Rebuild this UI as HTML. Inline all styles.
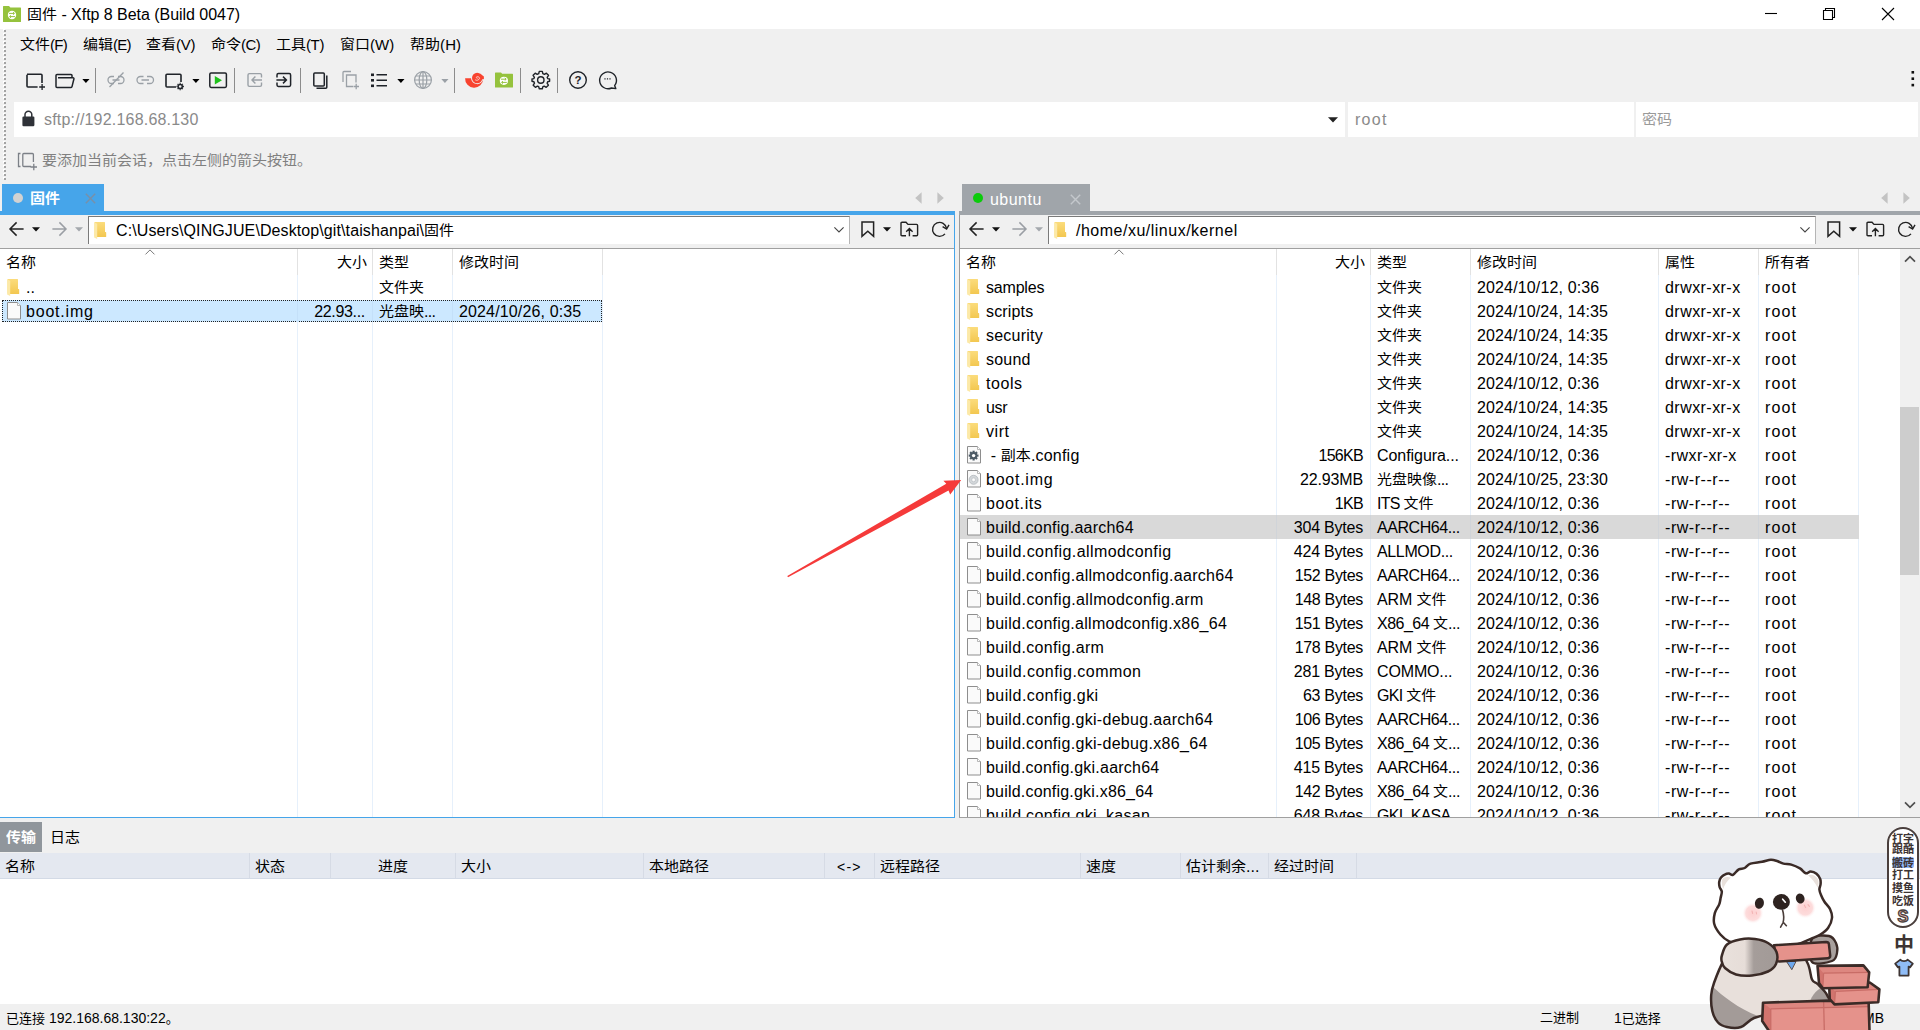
<!DOCTYPE html><html lang="zh-CN"><head><meta charset="utf-8"><title>Xftp</title><style>html,body{margin:0;padding:0}
body{width:1920px;height:1030px;overflow:hidden;background:#f0f0f0;position:relative;font-family:"Liberation Sans","Noto Sans CJK SC",sans-serif;font-size:16px;color:#000;letter-spacing:.3px}
.c{font-size:15px;letter-spacing:0;display:inline-block;transform:scaleY(.91);transform-origin:50% 32%}
.a{position:absolute}
.t{position:absolute;white-space:nowrap;line-height:24px;height:24px;margin-top:1px}
svg{position:absolute;overflow:visible}
.r{text-align:right}
.row{position:absolute;height:24px;left:0}
.sep{position:absolute;width:1px;background:#e5eefb}
</style></head><body>
<div class="a" style="left:0;top:0;width:1920px;height:29px;background:#fff"></div>
<svg style="left:3px;top:6px" width="18" height="16" viewBox="0 0 18 16">
<path d="M0 0.6 Q0 0 .6 0 H6 L7.4 1.6 H17.4 Q18 1.6 18 2.2 V15.4 Q18 16 17.4 16 H.6 Q0 16 0 15.4Z" fill="#95c23d"/>
<circle cx="9" cy="9" r="4.2" fill="#fff"/>
<path d="M6 7.4 H11.2 M10 6.2 L11.4 7.4 L10 8.6 M12 10.6 H6.8 M8 9.4 L6.6 10.6 L8 11.8" stroke="#95c23d" stroke-width="1" fill="none"/>
</svg>
<div class="t" style="left:27px;top:2px;letter-spacing:-0.04px"><span class="c">固件</span> - Xftp 8 Beta (Build 0047)</div>
<svg style="left:1760px;top:0" width="160" height="29" viewBox="0 0 160 29">
<path d="M5 13.5 H17" stroke="#000" stroke-width="1.1"/>
<path d="M63.5 10.5 H72.5 V19.5 H63.5Z M65.5 10.5 V8.5 H74.5 V17.5 H72.5" stroke="#000" stroke-width="1.1" fill="none"/>
<path d="M122 8 L134 20 M134 8 L122 20" stroke="#000" stroke-width="1.1"/>
</svg>
<div class="a" style="left:3px;top:29px;width:2px;height:150px;background:repeating-linear-gradient(to bottom,#fff 0 2px,transparent 2px 4px)"></div>
<div class="a" style="left:4px;top:30px;width:2px;height:150px;background:repeating-linear-gradient(to bottom,#a3a3a3 0 2px,transparent 2px 4px)"></div>
<div class="t" style="left:20px;top:32px;letter-spacing:-0.67px;font-size:15px"><span class="c">文件</span>(F)</div>
<div class="t" style="left:83px;top:32px;letter-spacing:-0.7px;font-size:15px"><span class="c">编辑</span>(E)</div>
<div class="t" style="left:146px;top:32px;letter-spacing:-0.21px;font-size:15px"><span class="c">查看</span>(V)</div>
<div class="t" style="left:211px;top:32px;letter-spacing:-0.54px;font-size:15px"><span class="c">命令</span>(C)</div>
<div class="t" style="left:276px;top:32px;letter-spacing:-0.39px;font-size:15px"><span class="c">工具</span>(T)</div>
<div class="t" style="left:340px;top:32px;letter-spacing:0.01px;font-size:15px"><span class="c">窗口</span>(W)</div>
<div class="t" style="left:410px;top:32px;letter-spacing:0.14px;font-size:15px"><span class="c">帮助</span>(H)</div>
<svg style="left:0;top:0" width="640" height="100" viewBox="0 0 640 100"><path d="M27 74.2 H41 Q42 74.2 42 75.2 V83 M37.6 87 H28 Q27 87 27 86 V74.7" stroke="#1f2329" stroke-width="1.6" fill="none"/><path d="M39.2 87 H45 M42.1 84 V90" stroke="#1f2329" stroke-width="1.3"/><path d="M56 86.5 V75.5 Q56 74.5 57 74.5 H71 Q72 74.5 72 75.5 V77 M58 77.8 H73 Q74.2 77.8 73.9 79 L72 86.6 Q71.7 87.6 70.7 87.6 H57 Q56 87.6 56 86.6" stroke="#1f2329" stroke-width="1.5" fill="none"/><g stroke="#9aa0a6" stroke-width="1.3" fill="none"><path d="M114 76.5 H111.5 A3.5 3.5 0 0 0 111.5 83.5 H114 M118 76.5 H120.5 A3.5 3.5 0 0 1 120.5 83.5 H118 M112.5 80 H119.5"/><path d="M109.5 87 L123.5 72.5"/></g><g stroke="#9aa0a6" stroke-width="1.3" fill="none"><path d="M143.5 76.5 H140.5 A3.5 3.5 0 0 0 140.5 83.5 H143.5 M147 76.5 H150 A3.5 3.5 0 0 1 150 83.5 H147 M141.5 80 H149"/></g><path d="M176 87 H167 Q166 87 166 86 V75.2 Q166 74.2 167 74.2 H180 Q181 74.2 181 75.2 V82" stroke="#1f2329" stroke-width="1.6" fill="none"/><circle cx="180.2" cy="86.5" r="2.1" stroke="#1f2329" stroke-width="1.5" fill="none"/><path transform="translate(-.3 -1)" d="M180.5 83.8V84.8M180.5 90.2V91.2M176.8 87.5H177.8M183.2 87.5H184.2M177.9 84.9L178.6 85.6M182.4 89.4L183.1 90.1M177.9 90.1L178.6 89.4M182.4 85.6L183.1 84.9" stroke="#1f2329" stroke-width="1.3"/><rect x="209.8" y="73" width="16.6" height="14.4" rx="1.3" stroke="#1f2329" stroke-width="1.5" fill="none"/><path d="M214.8 76 L222 80.2 L214.8 84.4Z" fill="#1fc11b"/><g stroke="#9aa0a6" stroke-width="1.4" fill="none"><path d="M261.5 77.4 V75 Q261.5 73.6 260.1 73.6 H249.4 Q248 73.6 248 75 V85 Q248 86.4 249.4 86.4 H260.1 Q261.5 86.4 261.5 85 V82.6 M252 80 H262 M255.4 76.6 L252 80 L255.4 83.4"/></g><g stroke="#1f2329" stroke-width="1.5" fill="none"><path d="M277 77.4 V75 Q277 73.6 278.4 73.6 H289.2 Q290.6 73.6 290.6 75 V85 Q290.6 86.4 289.2 86.4 H278.4 Q277 86.4 277 85 V82.6 M276.4 80 H286.4 M283 76.6 L286.4 80 L283 83.4"/></g><g stroke="#1f2329" stroke-width="1.5" fill="none"><rect x="313.8" y="73" width="10.5" height="13" rx="1"/><path d="M316.5 88.3 H325.8 Q326.8 88.3 326.8 87.3 V75.5"/></g><g stroke="#9aa0a6" stroke-width="1.3" fill="none"><path d="M343 82 V72.5 Q343 71.5 344 71.5 H351"/><path d="M353 86.5 H346.5 V75 H356 V82.5"/><path d="M353.5 86.5 H359 M356.2 83.8 V89.2"/></g><g fill="#1f2329"><rect x="371" y="73.5" width="3" height="2.6"/><rect x="371" y="79" width="3" height="2.6"/><rect x="371" y="84.5" width="3" height="2.6"/><rect x="376.5" y="74" width="10.5" height="1.5"/><rect x="376.5" y="79.5" width="10.5" height="1.5"/><rect x="376.5" y="85" width="10.5" height="1.5"/></g><g stroke="#9aa0a6" stroke-width="1.2" fill="none"><circle cx="423" cy="80" r="8.4"/><ellipse cx="423" cy="80" rx="3.8" ry="8.4"/><path d="M423 71.6 V88.4 M414.6 80 H431.4 M415.8 76 H430.2 M415.8 84 H430.2"/></g><circle cx="477.2" cy="78" r="5.2" fill="#f8432f"/><path d="M465.1 78.2 L471 78.2 A6.2 6.2 0 0 0 483.3 79 A9.1 9.1 0 0 1 465.1 78.2Z" fill="#f8432f"/><path d="M480 73.4 L483.9 76.4 L483.9 79 L481.4 79.4Z" fill="#f8432f"/><path d="M477.4 78.5 A1 1 0 0 1 476.6 76.9 A2.2 2.2 0 0 1 479.6 78.2 A2.9 2.9 0 0 1 475.2 79.8" stroke="#fcd5cf" stroke-width=".9" fill="none"/><path d="M495 73 Q495 72.4 495.6 72.4 H501 L502.2 73.8 H512.4 Q513 73.8 513 74.4 V87 Q513 87.6 512.4 87.6 H495.6 Q495 87.6 495 87Z" fill="#95c23d"/><circle cx="503.9" cy="80.8" r="4.1" fill="#fff"/><path d="M501 79.2 H506 M504.8 78 L506.2 79.2 L504.8 80.4 M506.8 82.4 H501.8 M503 81.2 L501.6 82.4 L503 83.6" stroke="#95c23d" stroke-width="1" fill="none"/><g transform="translate(540.8 80)"><path d="M-1.5 -8.6 H1.5 L2.1 -6.3 L3.6 -5.6 L5.6 -6.8 L7.7 -4.7 L6.4 -2.6 L6.9 -1.4 L8.8 -1 V1.3 L6.9 1.8 L6.3 3.2 L7.6 5.2 L5.4 7.3 L3.4 6.1 L2.1 6.7 L1.5 8.8 H-1.5 L-2.1 6.7 L-3.4 6.1 L-5.4 7.3 L-7.6 5.2 L-6.3 3.2 L-6.9 1.8 L-8.8 1.3 V-1 L-6.9 -1.4 L-6.4 -2.6 L-7.7 -4.7 L-5.6 -6.8 L-3.6 -5.6 L-2.1 -6.3Z" stroke="#1f2329" stroke-width="1.4" fill="none" stroke-linejoin="round"/><circle r="3.2" stroke="#1f2329" stroke-width="1.4" fill="none"/></g><circle cx="578" cy="80" r="8.3" stroke="#1f2329" stroke-width="1.4" fill="none"/><path d="M614.6 85.6 A8.4 8.4 0 1 0 611.5 88 L615.8 88.6 Z" stroke="#1f2329" stroke-width="1.4" fill="none" stroke-linejoin="round"/><path d="M604.4 78.8 H605.6 M606.9 78.8 H608.1 M609.4 78.8 H610.6" stroke="#1f2329" stroke-width="1.2"/><text x="578" y="84.2" text-anchor="middle" font-size="11.5" font-weight="bold" font-family="Liberation Sans,sans-serif" fill="#1f2329" letter-spacing="0">?</text></svg>
<div class="a" style="left:95px;top:68px;width:1px;height:25px;background:#8c8c8c"></div>
<div class="a" style="left:234px;top:68px;width:1px;height:25px;background:#8c8c8c"></div>
<div class="a" style="left:300px;top:68px;width:1px;height:25px;background:#8c8c8c"></div>
<div class="a" style="left:454px;top:68px;width:1px;height:25px;background:#8c8c8c"></div>
<div class="a" style="left:520px;top:68px;width:1px;height:25px;background:#8c8c8c"></div>
<div class="a" style="left:557px;top:68px;width:1px;height:25px;background:#8c8c8c"></div>
<svg style="left:82px;top:79px" width="8" height="5" viewBox="0 0 8 5"><path d="M.3 0 H7.5 L3.9 3.9Z" fill="#000"/></svg>
<svg style="left:192px;top:79px" width="8" height="5" viewBox="0 0 8 5"><path d="M.3 0 H7.5 L3.9 3.9Z" fill="#000"/></svg>
<svg style="left:397px;top:79px" width="8" height="5" viewBox="0 0 8 5"><path d="M.3 0 H7.5 L3.9 3.9Z" fill="#000"/></svg>
<svg style="left:441px;top:79px" width="8" height="5" viewBox="0 0 8 5"><path d="M.3 0 H7.5 L3.9 3.9Z" fill="#9aa0a6"/></svg>
<svg style="left:1911px;top:70px" width="4" height="18" viewBox="0 0 4 18"><rect x=".5" y="1" width="2.6" height="2.6" fill="#111"/><rect x=".5" y="7.4" width="2.6" height="2.6" fill="#111"/><rect x=".5" y="13.8" width="2.6" height="2.6" fill="#111"/></svg>
<div class="a" style="left:14px;top:102px;width:1331px;height:35px;background:#fff"></div>
<div class="a" style="left:1348px;top:102px;width:286px;height:35px;background:#fff"></div>
<div class="a" style="left:1636px;top:102px;width:282px;height:35px;background:#fff"></div>
<svg style="left:22px;top:110px" width="13" height="17" viewBox="0 0 13 17"><path d="M3 7 V4.6 A3.4 3.4 0 0 1 9.8 4.6 V7" stroke="#2f3238" stroke-width="1.5" fill="none"/><rect x=".4" y="6.6" width="12" height="9.6" rx="1.2" fill="#2f3238"/></svg>
<div class="t" style="left:44px;top:107px;color:#8a8a8a;letter-spacing:.2px">sftp://192.168.68.130</div>
<svg style="left:1328px;top:117px" width="10" height="6" viewBox="0 0 10 6"><path d="M0 .3 H10 L5 5.6Z" fill="#222"/></svg>
<div class="t" style="left:1355px;top:107px;color:#8a8a8a;letter-spacing:1.26px">root</div>
<div class="t" style="left:1642px;top:107px;color:#9a9a9a"><span class="c">密码</span></div>
<svg style="left:17px;top:151px" width="22" height="20" viewBox="0 0 22 20"><path d="M3.5 2.5 H1.5 V15.5 H3.5 M14 15.5 H6.8 Q5.8 15.5 5.8 14.5 V3.5 Q5.8 2.5 6.8 2.5 H15.4 Q16.4 2.5 16.4 3.5 V11 M13.5 16 H20 M16.8 12.8 V19.2" stroke="#7c8087" stroke-width="1.3" fill="none"/></svg>
<div class="t" style="left:42px;top:148px;color:#808080"><span class="c">要添加当前会话，点击左侧的箭头按钮。</span></div>
<svg width="0" height="0" style="left:0;top:0"><defs><linearGradient id="fg" x1="0" y1="0" x2="0" y2="1"><stop offset="0" stop-color="#fbdc7c"/><stop offset="1" stop-color="#f3c750"/></linearGradient></defs></svg>
<div class="a" style="left:0;top:249px;width:954px;height:568px;background:#fff"></div>
<div class="a" style="left:0;top:211px;width:955px;height:4px;background:#46a5ea"></div>
<div class="a" style="left:954px;top:215px;width:1px;height:603px;background:#46a5ea"></div>
<div class="a" style="left:0;top:817px;width:955px;height:1px;background:#46a5ea"></div>
<div class="a" style="left:0;top:248px;width:954px;height:1px;background:#a0a0a0"></div>
<div class="a" style="left:960px;top:249px;width:940px;height:568px;background:#fff"></div>
<div class="a" style="left:959px;top:211px;width:961px;height:4px;background:#a0a5aa"></div>
<div class="a" style="left:959px;top:215px;width:1px;height:603px;background:#9a9a9a"></div>
<div class="a" style="left:959px;top:817px;width:961px;height:1px;background:#a0a0a0"></div>
<div class="a" style="left:960px;top:248px;width:960px;height:1px;background:#a0a0a0"></div>
<div class="a" style="left:2px;top:184px;width:102px;height:27px;background:#46a5ea"></div>
<div class="a" style="left:13px;top:193px;width:10px;height:10px;border-radius:50%;background:#d2d2d2"></div>
<div class="t" style="left:30px;top:186px;color:#fff;font-weight:bold"><span class="c">固件</span></div>
<svg style="left:85px;top:193px" width="11" height="11" viewBox="0 0 11 11"><path d="M.8 .8 L10.2 10.2 M10.2 .8 L.8 10.2" stroke="#7890a8" stroke-width="1.4"/></svg>
<div class="a" style="left:962px;top:184px;width:128px;height:27px;background:#a0a5aa"></div>
<div class="a" style="left:973px;top:193px;width:10px;height:10px;border-radius:50%;background:#0bcb0b"></div>
<div class="t" style="left:990px;top:187px;color:#fff;letter-spacing:0.47px">ubuntu</div>
<svg style="left:1070px;top:194px" width="11" height="11" viewBox="0 0 11 11"><path d="M.8 .8 L10.2 10.2 M10.2 .8 L.8 10.2" stroke="#c4c8cc" stroke-width="1.4"/></svg>
<svg style="left:915px;top:192px" width="7" height="12" viewBox="0 0 7 12"><path d="M6.6 .2 V11.8 L.2 6Z" fill="#c3c3c3"/></svg>
<svg style="left:937px;top:192px" width="7" height="12" viewBox="0 0 7 12"><path d="M.4 .2 V11.8 L6.8 6Z" fill="#c3c3c3"/></svg>
<svg style="left:1881px;top:192px" width="7" height="12" viewBox="0 0 7 12"><path d="M6.6 .2 V11.8 L.2 6Z" fill="#c3c3c3"/></svg>
<svg style="left:1903px;top:192px" width="7" height="12" viewBox="0 0 7 12"><path d="M.4 .2 V11.8 L6.8 6Z" fill="#c3c3c3"/></svg>
<svg style="left:9px;top:221px" width="16" height="16" viewBox="0 0 16 16"><path d="M1.2 8 H14.6 M7.6 1.4 L1 8 L7.6 14.6" stroke="#222" stroke-width="1.5" fill="none"/></svg><svg style="left:32px;top:227px" width="8" height="5" viewBox="0 0 8 5"><path d="M0 .3 H8 L4 4.6Z" fill="#111"/></svg><svg style="left:52px;top:221px" width="16" height="16" viewBox="0 0 16 16"><path d="M.4 8 H13.8 M7.4 1.4 L14 8 L7.4 14.6" stroke="#9a9ea4" stroke-width="1.5" fill="none"/></svg><svg style="left:75px;top:227px" width="8" height="5" viewBox="0 0 8 5"><path d="M0 .3 H8 L4 4.6Z" fill="#a4a8ad"/></svg><div class="a" style="left:88px;top:216px;width:760px;height:27px;background:#fff;border:solid #7a7a7a;border-width:1px 0 0 1px;border-right:1px solid #b5b5b5"></div><svg style="left:94px;top:221.5px" width="13" height="17" viewBox="0 0 13 17"><path d="M.6 0 H10.6 Q11 0 11 .4 V10 H11.8 Q12.2 10 12.2 10.4 V14.7 Q12.2 15.1 11.8 15.1 H3 L.6 14Z" fill="url(#fg)"/><path d="M.1 .2 L3.2 1.7 V17.1 L.1 15.4Z" fill="#fce9a8"/></svg><div class="t" style="left:116px;top:218px;letter-spacing:0.1px">C:\Users\QINGJUE\Desktop\git\taishanpai\<span class="c">固件</span></div><svg style="left:834px;top:227px" width="10" height="6" viewBox="0 0 10 6"><path d="M.4 .4 L5 5 L9.6 .4" stroke="#444" stroke-width="1.1" fill="none"/></svg><svg style="left:861px;top:221px" width="14" height="17" viewBox="0 0 14 17"><path d="M1 1 H12.6 V15.4 L6.8 10.2 L1 15.4Z" stroke="#222" stroke-width="1.5" fill="none" stroke-linejoin="miter"/></svg><svg style="left:883px;top:227px" width="8" height="5" viewBox="0 0 8 5"><path d="M0 .3 H8 L4 4.6Z" fill="#111"/></svg><svg style="left:900px;top:221px" width="19" height="16" viewBox="0 0 19 16"><path d="M6 14.8 H2 Q1 14.8 1 13.8 V2.2 Q1 1.2 2 1.2 H6 L8 3.4 H16.6 Q17.6 3.4 17.6 4.4 V13.8 Q17.6 14.8 16.6 14.8 H12.6 M9.4 15.2 V8 M6.2 10.8 L9.4 7.6 L12.6 10.8" stroke="#222" stroke-width="1.4" fill="none"/></svg><svg style="left:931px;top:220px" width="19" height="18" viewBox="0 0 19 18"><path d="M13.96 13.9 A7 7 0 1 1 15.53 8.43" stroke="#222" stroke-width="1.4" fill="none"/><path d="M11.6 6.6 L15.6 9 L18 4.8" stroke="#222" stroke-width="1.4" fill="none"/></svg>
<svg style="left:969px;top:221px" width="16" height="16" viewBox="0 0 16 16"><path d="M1.2 8 H14.6 M7.6 1.4 L1 8 L7.6 14.6" stroke="#222" stroke-width="1.5" fill="none"/></svg><svg style="left:992px;top:227px" width="8" height="5" viewBox="0 0 8 5"><path d="M0 .3 H8 L4 4.6Z" fill="#111"/></svg><svg style="left:1012px;top:221px" width="16" height="16" viewBox="0 0 16 16"><path d="M.4 8 H13.8 M7.4 1.4 L14 8 L7.4 14.6" stroke="#9a9ea4" stroke-width="1.5" fill="none"/></svg><svg style="left:1035px;top:227px" width="8" height="5" viewBox="0 0 8 5"><path d="M0 .3 H8 L4 4.6Z" fill="#a4a8ad"/></svg><div class="a" style="left:1048px;top:216px;width:766px;height:27px;background:#fff;border:solid #7a7a7a;border-width:1px 0 0 1px;border-right:1px solid #b5b5b5"></div><svg style="left:1054px;top:221.5px" width="13" height="17" viewBox="0 0 13 17"><path d="M.6 0 H10.6 Q11 0 11 .4 V10 H11.8 Q12.2 10 12.2 10.4 V14.7 Q12.2 15.1 11.8 15.1 H3 L.6 14Z" fill="url(#fg)"/><path d="M.1 .2 L3.2 1.7 V17.1 L.1 15.4Z" fill="#fce9a8"/></svg><div class="t" style="left:1076px;top:218px;letter-spacing:0.5px">/home/xu/linux/kernel</div><svg style="left:1800px;top:227px" width="10" height="6" viewBox="0 0 10 6"><path d="M.4 .4 L5 5 L9.6 .4" stroke="#444" stroke-width="1.1" fill="none"/></svg><svg style="left:1827px;top:221px" width="14" height="17" viewBox="0 0 14 17"><path d="M1 1 H12.6 V15.4 L6.8 10.2 L1 15.4Z" stroke="#222" stroke-width="1.5" fill="none" stroke-linejoin="miter"/></svg><svg style="left:1849px;top:227px" width="8" height="5" viewBox="0 0 8 5"><path d="M0 .3 H8 L4 4.6Z" fill="#111"/></svg><svg style="left:1866px;top:221px" width="19" height="16" viewBox="0 0 19 16"><path d="M6 14.8 H2 Q1 14.8 1 13.8 V2.2 Q1 1.2 2 1.2 H6 L8 3.4 H16.6 Q17.6 3.4 17.6 4.4 V13.8 Q17.6 14.8 16.6 14.8 H12.6 M9.4 15.2 V8 M6.2 10.8 L9.4 7.6 L12.6 10.8" stroke="#222" stroke-width="1.4" fill="none"/></svg><svg style="left:1897px;top:220px" width="19" height="18" viewBox="0 0 19 18"><path d="M13.96 13.9 A7 7 0 1 1 15.53 8.43" stroke="#222" stroke-width="1.4" fill="none"/><path d="M11.6 6.6 L15.6 9 L18 4.8" stroke="#222" stroke-width="1.4" fill="none"/></svg>
<div class="a" style="left:297px;top:249px;width:1px;height:26px;background:#e2e2e2"></div>
<div class="a" style="left:297px;top:275px;width:1px;height:542px;background:#e6f0fb"></div>
<div class="a" style="left:372px;top:249px;width:1px;height:26px;background:#e2e2e2"></div>
<div class="a" style="left:372px;top:275px;width:1px;height:542px;background:#e6f0fb"></div>
<div class="a" style="left:452px;top:249px;width:1px;height:26px;background:#e2e2e2"></div>
<div class="a" style="left:452px;top:275px;width:1px;height:542px;background:#e6f0fb"></div>
<div class="a" style="left:602px;top:249px;width:1px;height:26px;background:#e2e2e2"></div>
<div class="a" style="left:602px;top:275px;width:1px;height:542px;background:#e6f0fb"></div>
<div class="t" style="left:6px;top:250px"><span class="c">名称</span></div>
<div class="t r" style="left:307px;width:60px;top:250px"><span class="c">大小</span></div>
<div class="t" style="left:379px;top:250px"><span class="c">类型</span></div>
<div class="t" style="left:459px;top:250px"><span class="c">修改时间</span></div>
<svg style="left:145px;top:249px" width="10" height="6" viewBox="0 0 10 6"><path d="M.5 5.4 L5 .9 L9.5 5.4" stroke="#7a7a7a" stroke-width="1" fill="none"/></svg>
<svg style="left:7px;top:279px" width="13" height="17" viewBox="0 0 13 17"><path d="M.6 0 H10.6 Q11 0 11 .4 V10 H11.8 Q12.2 10 12.2 10.4 V14.7 Q12.2 15.1 11.8 15.1 H3 L.6 14Z" fill="url(#fg)"/><path d="M.1 .2 L3.2 1.7 V17.1 L.1 15.4Z" fill="#fce9a8"/></svg>
<div class="t" style="left:26px;top:275px;letter-spacing:0">..</div>
<div class="t" style="left:379px;top:275px"><span class="c">文件夹</span></div>
<div class="a" style="left:2px;top:300px;width:600px;height:22px;background:#cce8ff;outline:1px dotted #222;outline-offset:-1px"></div>
<div class="a" style="left:297px;top:301px;width:1px;height:21px;background:#c4e0f9"></div>
<div class="a" style="left:372px;top:301px;width:1px;height:21px;background:#c4e0f9"></div>
<div class="a" style="left:452px;top:301px;width:1px;height:21px;background:#c4e0f9"></div>
<svg style="left:7px;top:301.8px" width="15" height="18" viewBox="0 0 15 18"><path d="M.5 .5 H10.5 L13.5 3.5 V17 H.5Z" fill="#fafafa" stroke="#8e8e8e" stroke-width="1"/><path d="M10.5 .5 V3.5 H13.5" fill="#fff" stroke="#a6a6a6" stroke-width=".8"/></svg>
<div class="t" style="left:26px;top:299px;letter-spacing:0.79px">boot.img</div>
<div class="t r" style="left:300px;width:65px;top:299px;letter-spacing:-0.32px">22.93...</div>
<div class="t" style="left:379px;top:299px;letter-spacing:-0.7px"><span class="c">光盘映</span>...</div>
<div class="t" style="left:459px;top:299px;letter-spacing:0.14px">2024/10/26, 0:35</div>
<div class="a" style="left:1276px;top:249px;width:1px;height:26px;background:#e2e2e2"></div>
<div class="a" style="left:1276px;top:275px;width:1px;height:542px;background:#e6f0fb"></div>
<div class="a" style="left:1370px;top:249px;width:1px;height:26px;background:#e2e2e2"></div>
<div class="a" style="left:1370px;top:275px;width:1px;height:542px;background:#e6f0fb"></div>
<div class="a" style="left:1470px;top:249px;width:1px;height:26px;background:#e2e2e2"></div>
<div class="a" style="left:1470px;top:275px;width:1px;height:542px;background:#e6f0fb"></div>
<div class="a" style="left:1658px;top:249px;width:1px;height:26px;background:#e2e2e2"></div>
<div class="a" style="left:1658px;top:275px;width:1px;height:542px;background:#e6f0fb"></div>
<div class="a" style="left:1758px;top:249px;width:1px;height:26px;background:#e2e2e2"></div>
<div class="a" style="left:1758px;top:275px;width:1px;height:542px;background:#e6f0fb"></div>
<div class="a" style="left:1858px;top:249px;width:1px;height:26px;background:#e2e2e2"></div>
<div class="a" style="left:1858px;top:275px;width:1px;height:542px;background:#e6f0fb"></div>
<div class="t" style="left:966px;top:250px"><span class="c">名称</span></div>
<div class="t r" style="left:1305px;width:60px;top:250px"><span class="c">大小</span></div>
<div class="t" style="left:1377px;top:250px"><span class="c">类型</span></div>
<div class="t" style="left:1477px;top:250px"><span class="c">修改时间</span></div>
<div class="t" style="left:1665px;top:250px"><span class="c">属性</span></div>
<div class="t" style="left:1765px;top:250px"><span class="c">所有者</span></div>
<svg style="left:1114px;top:249px" width="10" height="6" viewBox="0 0 10 6"><path d="M.5 5.4 L5 .9 L9.5 5.4" stroke="#7a7a7a" stroke-width="1" fill="none"/></svg>
<div class="a" style="left:960px;top:275px;width:940px;height:542px;overflow:hidden">
<svg style="left:7px;top:4px" width="13" height="17" viewBox="0 0 13 17"><path d="M.6 0 H10.6 Q11 0 11 .4 V10 H11.8 Q12.2 10 12.2 10.4 V14.7 Q12.2 15.1 11.8 15.1 H3 L.6 14Z" fill="url(#fg)"/><path d="M.1 .2 L3.2 1.7 V17.1 L.1 15.4Z" fill="#fce9a8"/></svg>
<div class="t" style="left:26px;top:0px;white-space:pre;letter-spacing:-0.2px;">samples</div>
<div class="t" style="left:417px;top:0px;"><span class="c">文件夹</span></div>
<div class="t" style="left:517px;top:0px;letter-spacing:0.14px;">2024/10/12, 0:36</div>
<div class="t" style="left:705px;top:0px;letter-spacing:0.45px;">drwxr-xr-x</div>
<div class="t" style="left:805px;top:0px;letter-spacing:1.09px;">root</div>
<svg style="left:7px;top:28px" width="13" height="17" viewBox="0 0 13 17"><path d="M.6 0 H10.6 Q11 0 11 .4 V10 H11.8 Q12.2 10 12.2 10.4 V14.7 Q12.2 15.1 11.8 15.1 H3 L.6 14Z" fill="url(#fg)"/><path d="M.1 .2 L3.2 1.7 V17.1 L.1 15.4Z" fill="#fce9a8"/></svg>
<div class="t" style="left:26px;top:24px;white-space:pre;letter-spacing:0.15px;">scripts</div>
<div class="t" style="left:417px;top:24px;"><span class="c">文件夹</span></div>
<div class="t" style="left:517px;top:24px;letter-spacing:0.12px;">2024/10/24, 14:35</div>
<div class="t" style="left:705px;top:24px;letter-spacing:0.45px;">drwxr-xr-x</div>
<div class="t" style="left:805px;top:24px;letter-spacing:1.09px;">root</div>
<svg style="left:7px;top:52px" width="13" height="17" viewBox="0 0 13 17"><path d="M.6 0 H10.6 Q11 0 11 .4 V10 H11.8 Q12.2 10 12.2 10.4 V14.7 Q12.2 15.1 11.8 15.1 H3 L.6 14Z" fill="url(#fg)"/><path d="M.1 .2 L3.2 1.7 V17.1 L.1 15.4Z" fill="#fce9a8"/></svg>
<div class="t" style="left:26px;top:48px;white-space:pre;letter-spacing:0.22px;">security</div>
<div class="t" style="left:417px;top:48px;"><span class="c">文件夹</span></div>
<div class="t" style="left:517px;top:48px;letter-spacing:0.12px;">2024/10/24, 14:35</div>
<div class="t" style="left:705px;top:48px;letter-spacing:0.45px;">drwxr-xr-x</div>
<div class="t" style="left:805px;top:48px;letter-spacing:1.09px;">root</div>
<svg style="left:7px;top:76px" width="13" height="17" viewBox="0 0 13 17"><path d="M.6 0 H10.6 Q11 0 11 .4 V10 H11.8 Q12.2 10 12.2 10.4 V14.7 Q12.2 15.1 11.8 15.1 H3 L.6 14Z" fill="url(#fg)"/><path d="M.1 .2 L3.2 1.7 V17.1 L.1 15.4Z" fill="#fce9a8"/></svg>
<div class="t" style="left:26px;top:72px;white-space:pre;letter-spacing:0.2px;">sound</div>
<div class="t" style="left:417px;top:72px;"><span class="c">文件夹</span></div>
<div class="t" style="left:517px;top:72px;letter-spacing:0.12px;">2024/10/24, 14:35</div>
<div class="t" style="left:705px;top:72px;letter-spacing:0.45px;">drwxr-xr-x</div>
<div class="t" style="left:805px;top:72px;letter-spacing:1.09px;">root</div>
<svg style="left:7px;top:100px" width="13" height="17" viewBox="0 0 13 17"><path d="M.6 0 H10.6 Q11 0 11 .4 V10 H11.8 Q12.2 10 12.2 10.4 V14.7 Q12.2 15.1 11.8 15.1 H3 L.6 14Z" fill="url(#fg)"/><path d="M.1 .2 L3.2 1.7 V17.1 L.1 15.4Z" fill="#fce9a8"/></svg>
<div class="t" style="left:26px;top:96px;white-space:pre;letter-spacing:0.58px;">tools</div>
<div class="t" style="left:417px;top:96px;"><span class="c">文件夹</span></div>
<div class="t" style="left:517px;top:96px;letter-spacing:0.14px;">2024/10/12, 0:36</div>
<div class="t" style="left:705px;top:96px;letter-spacing:0.45px;">drwxr-xr-x</div>
<div class="t" style="left:805px;top:96px;letter-spacing:1.09px;">root</div>
<svg style="left:7px;top:124px" width="13" height="17" viewBox="0 0 13 17"><path d="M.6 0 H10.6 Q11 0 11 .4 V10 H11.8 Q12.2 10 12.2 10.4 V14.7 Q12.2 15.1 11.8 15.1 H3 L.6 14Z" fill="url(#fg)"/><path d="M.1 .2 L3.2 1.7 V17.1 L.1 15.4Z" fill="#fce9a8"/></svg>
<div class="t" style="left:26px;top:120px;white-space:pre;letter-spacing:-0.29px;">usr</div>
<div class="t" style="left:417px;top:120px;"><span class="c">文件夹</span></div>
<div class="t" style="left:517px;top:120px;letter-spacing:0.12px;">2024/10/24, 14:35</div>
<div class="t" style="left:705px;top:120px;letter-spacing:0.45px;">drwxr-xr-x</div>
<div class="t" style="left:805px;top:120px;letter-spacing:1.09px;">root</div>
<svg style="left:7px;top:148px" width="13" height="17" viewBox="0 0 13 17"><path d="M.6 0 H10.6 Q11 0 11 .4 V10 H11.8 Q12.2 10 12.2 10.4 V14.7 Q12.2 15.1 11.8 15.1 H3 L.6 14Z" fill="url(#fg)"/><path d="M.1 .2 L3.2 1.7 V17.1 L.1 15.4Z" fill="#fce9a8"/></svg>
<div class="t" style="left:26px;top:144px;white-space:pre;letter-spacing:0.56px;">virt</div>
<div class="t" style="left:417px;top:144px;"><span class="c">文件夹</span></div>
<div class="t" style="left:517px;top:144px;letter-spacing:0.12px;">2024/10/24, 14:35</div>
<div class="t" style="left:705px;top:144px;letter-spacing:0.45px;">drwxr-xr-x</div>
<div class="t" style="left:805px;top:144px;letter-spacing:1.09px;">root</div>
<svg style="left:7px;top:170.8px" width="15" height="18" viewBox="0 0 15 18"><path d="M.5 .5 H10.5 L13.5 3.5 V17 H.5Z" fill="#fafafa" stroke="#8e8e8e" stroke-width="1"/><path d="M10.5 .5 V3.5 H13.5" fill="#fff" stroke="#a6a6a6" stroke-width=".8"/><g transform="translate(6.6 9.6)" fill="#4d5b66"><circle r="3.6"/><rect x="-1.1" y="-4.9" width="2.2" height="2.2" transform="rotate(0)"/><rect x="-1.1" y="-4.9" width="2.2" height="2.2" transform="rotate(45)"/><rect x="-1.1" y="-4.9" width="2.2" height="2.2" transform="rotate(90)"/><rect x="-1.1" y="-4.9" width="2.2" height="2.2" transform="rotate(135)"/><rect x="-1.1" y="-4.9" width="2.2" height="2.2" transform="rotate(180)"/><rect x="-1.1" y="-4.9" width="2.2" height="2.2" transform="rotate(225)"/><rect x="-1.1" y="-4.9" width="2.2" height="2.2" transform="rotate(270)"/><rect x="-1.1" y="-4.9" width="2.2" height="2.2" transform="rotate(315)"/><circle r="1.7" fill="#fff"/></g></svg>
<div class="t" style="left:26px;top:168px;white-space:pre;letter-spacing:0.21px;"> - <span class="c">副本</span>.config</div>
<div class="t r" style="left:318px;width:85px;top:168px;letter-spacing:-0.7px;">156KB</div>
<div class="t" style="left:417px;top:168px;letter-spacing:-0.06px;">Configura...</div>
<div class="t" style="left:517px;top:168px;letter-spacing:0.14px;">2024/10/12, 0:36</div>
<div class="t" style="left:705px;top:168px;letter-spacing:0.42px;">-rwxr-xr-x</div>
<div class="t" style="left:805px;top:168px;letter-spacing:1.09px;">root</div>
<svg style="left:7px;top:194.8px" width="15" height="18" viewBox="0 0 15 18"><path d="M.5 .5 H10.5 L13.5 3.5 V17 H.5Z" fill="#fafafa" stroke="#8e8e8e" stroke-width="1"/><path d="M10.5 .5 V3.5 H13.5" fill="#fff" stroke="#a6a6a6" stroke-width=".8"/><circle cx="6.6" cy="9.8" r="4.5" fill="#d3d7da" stroke="#aeb3b8" stroke-width=".7"/><circle cx="6.6" cy="9.8" r="2" fill="#f4f4f4" stroke="#b3b8bd" stroke-width=".6"/><circle cx="6.6" cy="9.8" r=".8" fill="#fff"/></svg>
<div class="t" style="left:26px;top:192px;white-space:pre;letter-spacing:0.75px;">boot.img</div>
<div class="t r" style="left:318px;width:85px;top:192px;letter-spacing:-0.15px;">22.93MB</div>
<div class="t" style="left:417px;top:192px;letter-spacing:-0.7px;"><span class="c">光盘映像</span>...</div>
<div class="t" style="left:517px;top:192px;letter-spacing:0.12px;">2024/10/25, 23:30</div>
<div class="t" style="left:705px;top:192px;letter-spacing:0.55px;">-rw-r--r--</div>
<div class="t" style="left:805px;top:192px;letter-spacing:1.09px;">root</div>
<svg style="left:7px;top:218.8px" width="15" height="18" viewBox="0 0 15 18"><path d="M.5 .5 H10.5 L13.5 3.5 V17 H.5Z" fill="#fafafa" stroke="#8e8e8e" stroke-width="1"/><path d="M10.5 .5 V3.5 H13.5" fill="#fff" stroke="#a6a6a6" stroke-width=".8"/></svg>
<div class="t" style="left:26px;top:216px;white-space:pre;letter-spacing:0.61px;">boot.its</div>
<div class="t r" style="left:318px;width:85px;top:216px;letter-spacing:-0.7px;">1KB</div>
<div class="t" style="left:417px;top:216px;letter-spacing:-0.7px;">ITS <span class="c">文件</span></div>
<div class="t" style="left:517px;top:216px;letter-spacing:0.14px;">2024/10/12, 0:36</div>
<div class="t" style="left:705px;top:216px;letter-spacing:0.55px;">-rw-r--r--</div>
<div class="t" style="left:805px;top:216px;letter-spacing:1.09px;">root</div>
<div class="a" style="left:0;top:240px;width:899px;height:24px;background:#d9d9d9"></div>
<div class="a" style="left:316px;top:240px;width:1px;height:24px;background:#d0d4d9"></div>
<div class="a" style="left:410px;top:240px;width:1px;height:24px;background:#d0d4d9"></div>
<div class="a" style="left:510px;top:240px;width:1px;height:24px;background:#d0d4d9"></div>
<div class="a" style="left:698px;top:240px;width:1px;height:24px;background:#d0d4d9"></div>
<div class="a" style="left:798px;top:240px;width:1px;height:24px;background:#d0d4d9"></div>
<svg style="left:7px;top:242.8px" width="15" height="18" viewBox="0 0 15 18"><path d="M.5 .5 H10.5 L13.5 3.5 V17 H.5Z" fill="#fafafa" stroke="#8e8e8e" stroke-width="1"/><path d="M10.5 .5 V3.5 H13.5" fill="#fff" stroke="#a6a6a6" stroke-width=".8"/></svg>
<div class="t" style="left:26px;top:240px;white-space:pre;letter-spacing:0.23px;">build.config.aarch64</div>
<div class="t r" style="left:318px;width:85px;top:240px;letter-spacing:-0.22px;">304 Bytes</div>
<div class="t" style="left:417px;top:240px;letter-spacing:-0.43px;">AARCH64...</div>
<div class="t" style="left:517px;top:240px;letter-spacing:0.14px;">2024/10/12, 0:36</div>
<div class="t" style="left:705px;top:240px;letter-spacing:0.55px;">-rw-r--r--</div>
<div class="t" style="left:805px;top:240px;letter-spacing:1.09px;">root</div>
<svg style="left:7px;top:266.8px" width="15" height="18" viewBox="0 0 15 18"><path d="M.5 .5 H10.5 L13.5 3.5 V17 H.5Z" fill="#fafafa" stroke="#8e8e8e" stroke-width="1"/><path d="M10.5 .5 V3.5 H13.5" fill="#fff" stroke="#a6a6a6" stroke-width=".8"/></svg>
<div class="t" style="left:26px;top:264px;white-space:pre;letter-spacing:0.41px;">build.config.allmodconfig</div>
<div class="t r" style="left:318px;width:85px;top:264px;letter-spacing:-0.22px;">424 Bytes</div>
<div class="t" style="left:417px;top:264px;letter-spacing:-0.36px;">ALLMOD...</div>
<div class="t" style="left:517px;top:264px;letter-spacing:0.14px;">2024/10/12, 0:36</div>
<div class="t" style="left:705px;top:264px;letter-spacing:0.55px;">-rw-r--r--</div>
<div class="t" style="left:805px;top:264px;letter-spacing:1.09px;">root</div>
<svg style="left:7px;top:290.8px" width="15" height="18" viewBox="0 0 15 18"><path d="M.5 .5 H10.5 L13.5 3.5 V17 H.5Z" fill="#fafafa" stroke="#8e8e8e" stroke-width="1"/><path d="M10.5 .5 V3.5 H13.5" fill="#fff" stroke="#a6a6a6" stroke-width=".8"/></svg>
<div class="t" style="left:26px;top:288px;white-space:pre;letter-spacing:0.31px;">build.config.allmodconfig.aarch64</div>
<div class="t r" style="left:318px;width:85px;top:288px;letter-spacing:-0.31px;">152 Bytes</div>
<div class="t" style="left:417px;top:288px;letter-spacing:-0.43px;">AARCH64...</div>
<div class="t" style="left:517px;top:288px;letter-spacing:0.14px;">2024/10/12, 0:36</div>
<div class="t" style="left:705px;top:288px;letter-spacing:0.55px;">-rw-r--r--</div>
<div class="t" style="left:805px;top:288px;letter-spacing:1.09px;">root</div>
<svg style="left:7px;top:314.8px" width="15" height="18" viewBox="0 0 15 18"><path d="M.5 .5 H10.5 L13.5 3.5 V17 H.5Z" fill="#fafafa" stroke="#8e8e8e" stroke-width="1"/><path d="M10.5 .5 V3.5 H13.5" fill="#fff" stroke="#a6a6a6" stroke-width=".8"/></svg>
<div class="t" style="left:26px;top:312px;white-space:pre;letter-spacing:0.36px;">build.config.allmodconfig.arm</div>
<div class="t r" style="left:318px;width:85px;top:312px;letter-spacing:-0.31px;">148 Bytes</div>
<div class="t" style="left:417px;top:312px;letter-spacing:-0.15px;">ARM <span class="c">文件</span></div>
<div class="t" style="left:517px;top:312px;letter-spacing:0.14px;">2024/10/12, 0:36</div>
<div class="t" style="left:705px;top:312px;letter-spacing:0.55px;">-rw-r--r--</div>
<div class="t" style="left:805px;top:312px;letter-spacing:1.09px;">root</div>
<svg style="left:7px;top:338.8px" width="15" height="18" viewBox="0 0 15 18"><path d="M.5 .5 H10.5 L13.5 3.5 V17 H.5Z" fill="#fafafa" stroke="#8e8e8e" stroke-width="1"/><path d="M10.5 .5 V3.5 H13.5" fill="#fff" stroke="#a6a6a6" stroke-width=".8"/></svg>
<div class="t" style="left:26px;top:336px;white-space:pre;letter-spacing:0.28px;">build.config.allmodconfig.x86_64</div>
<div class="t r" style="left:318px;width:85px;top:336px;letter-spacing:-0.31px;">151 Bytes</div>
<div class="t" style="left:417px;top:336px;letter-spacing:-0.51px;">X86_64 <span class="c">文</span>...</div>
<div class="t" style="left:517px;top:336px;letter-spacing:0.14px;">2024/10/12, 0:36</div>
<div class="t" style="left:705px;top:336px;letter-spacing:0.55px;">-rw-r--r--</div>
<div class="t" style="left:805px;top:336px;letter-spacing:1.09px;">root</div>
<svg style="left:7px;top:362.8px" width="15" height="18" viewBox="0 0 15 18"><path d="M.5 .5 H10.5 L13.5 3.5 V17 H.5Z" fill="#fafafa" stroke="#8e8e8e" stroke-width="1"/><path d="M10.5 .5 V3.5 H13.5" fill="#fff" stroke="#a6a6a6" stroke-width=".8"/></svg>
<div class="t" style="left:26px;top:360px;white-space:pre;letter-spacing:0.33px;">build.config.arm</div>
<div class="t r" style="left:318px;width:85px;top:360px;letter-spacing:-0.31px;">178 Bytes</div>
<div class="t" style="left:417px;top:360px;letter-spacing:-0.15px;">ARM <span class="c">文件</span></div>
<div class="t" style="left:517px;top:360px;letter-spacing:0.14px;">2024/10/12, 0:36</div>
<div class="t" style="left:705px;top:360px;letter-spacing:0.55px;">-rw-r--r--</div>
<div class="t" style="left:805px;top:360px;letter-spacing:1.09px;">root</div>
<svg style="left:7px;top:386.8px" width="15" height="18" viewBox="0 0 15 18"><path d="M.5 .5 H10.5 L13.5 3.5 V17 H.5Z" fill="#fafafa" stroke="#8e8e8e" stroke-width="1"/><path d="M10.5 .5 V3.5 H13.5" fill="#fff" stroke="#a6a6a6" stroke-width=".8"/></svg>
<div class="t" style="left:26px;top:384px;white-space:pre;letter-spacing:0.46px;">build.config.common</div>
<div class="t r" style="left:318px;width:85px;top:384px;letter-spacing:-0.22px;">281 Bytes</div>
<div class="t" style="left:417px;top:384px;letter-spacing:-0.15px;">COMMO...</div>
<div class="t" style="left:517px;top:384px;letter-spacing:0.14px;">2024/10/12, 0:36</div>
<div class="t" style="left:705px;top:384px;letter-spacing:0.55px;">-rw-r--r--</div>
<div class="t" style="left:805px;top:384px;letter-spacing:1.09px;">root</div>
<svg style="left:7px;top:410.8px" width="15" height="18" viewBox="0 0 15 18"><path d="M.5 .5 H10.5 L13.5 3.5 V17 H.5Z" fill="#fafafa" stroke="#8e8e8e" stroke-width="1"/><path d="M10.5 .5 V3.5 H13.5" fill="#fff" stroke="#a6a6a6" stroke-width=".8"/></svg>
<div class="t" style="left:26px;top:408px;white-space:pre;letter-spacing:0.42px;">build.config.gki</div>
<div class="t r" style="left:318px;width:85px;top:408px;letter-spacing:-0.28px;">63 Bytes</div>
<div class="t" style="left:417px;top:408px;letter-spacing:-0.7px;">GKI <span class="c">文件</span></div>
<div class="t" style="left:517px;top:408px;letter-spacing:0.14px;">2024/10/12, 0:36</div>
<div class="t" style="left:705px;top:408px;letter-spacing:0.55px;">-rw-r--r--</div>
<div class="t" style="left:805px;top:408px;letter-spacing:1.09px;">root</div>
<svg style="left:7px;top:434.8px" width="15" height="18" viewBox="0 0 15 18"><path d="M.5 .5 H10.5 L13.5 3.5 V17 H.5Z" fill="#fafafa" stroke="#8e8e8e" stroke-width="1"/><path d="M10.5 .5 V3.5 H13.5" fill="#fff" stroke="#a6a6a6" stroke-width=".8"/></svg>
<div class="t" style="left:26px;top:432px;white-space:pre;letter-spacing:0.31px;">build.config.gki-debug.aarch64</div>
<div class="t r" style="left:318px;width:85px;top:432px;letter-spacing:-0.31px;">106 Bytes</div>
<div class="t" style="left:417px;top:432px;letter-spacing:-0.43px;">AARCH64...</div>
<div class="t" style="left:517px;top:432px;letter-spacing:0.14px;">2024/10/12, 0:36</div>
<div class="t" style="left:705px;top:432px;letter-spacing:0.55px;">-rw-r--r--</div>
<div class="t" style="left:805px;top:432px;letter-spacing:1.09px;">root</div>
<svg style="left:7px;top:458.8px" width="15" height="18" viewBox="0 0 15 18"><path d="M.5 .5 H10.5 L13.5 3.5 V17 H.5Z" fill="#fafafa" stroke="#8e8e8e" stroke-width="1"/><path d="M10.5 .5 V3.5 H13.5" fill="#fff" stroke="#a6a6a6" stroke-width=".8"/></svg>
<div class="t" style="left:26px;top:456px;white-space:pre;letter-spacing:0.31px;">build.config.gki-debug.x86_64</div>
<div class="t r" style="left:318px;width:85px;top:456px;letter-spacing:-0.31px;">105 Bytes</div>
<div class="t" style="left:417px;top:456px;letter-spacing:-0.51px;">X86_64 <span class="c">文</span>...</div>
<div class="t" style="left:517px;top:456px;letter-spacing:0.14px;">2024/10/12, 0:36</div>
<div class="t" style="left:705px;top:456px;letter-spacing:0.55px;">-rw-r--r--</div>
<div class="t" style="left:805px;top:456px;letter-spacing:1.09px;">root</div>
<svg style="left:7px;top:482.8px" width="15" height="18" viewBox="0 0 15 18"><path d="M.5 .5 H10.5 L13.5 3.5 V17 H.5Z" fill="#fafafa" stroke="#8e8e8e" stroke-width="1"/><path d="M10.5 .5 V3.5 H13.5" fill="#fff" stroke="#a6a6a6" stroke-width=".8"/></svg>
<div class="t" style="left:26px;top:480px;white-space:pre;letter-spacing:0.22px;">build.config.gki.aarch64</div>
<div class="t r" style="left:318px;width:85px;top:480px;letter-spacing:-0.22px;">415 Bytes</div>
<div class="t" style="left:417px;top:480px;letter-spacing:-0.43px;">AARCH64...</div>
<div class="t" style="left:517px;top:480px;letter-spacing:0.14px;">2024/10/12, 0:36</div>
<div class="t" style="left:705px;top:480px;letter-spacing:0.55px;">-rw-r--r--</div>
<div class="t" style="left:805px;top:480px;letter-spacing:1.09px;">root</div>
<svg style="left:7px;top:506.8px" width="15" height="18" viewBox="0 0 15 18"><path d="M.5 .5 H10.5 L13.5 3.5 V17 H.5Z" fill="#fafafa" stroke="#8e8e8e" stroke-width="1"/><path d="M10.5 .5 V3.5 H13.5" fill="#fff" stroke="#a6a6a6" stroke-width=".8"/></svg>
<div class="t" style="left:26px;top:504px;white-space:pre;letter-spacing:0.2px;">build.config.gki.x86_64</div>
<div class="t r" style="left:318px;width:85px;top:504px;letter-spacing:-0.31px;">142 Bytes</div>
<div class="t" style="left:417px;top:504px;letter-spacing:-0.51px;">X86_64 <span class="c">文</span>...</div>
<div class="t" style="left:517px;top:504px;letter-spacing:0.14px;">2024/10/12, 0:36</div>
<div class="t" style="left:705px;top:504px;letter-spacing:0.55px;">-rw-r--r--</div>
<div class="t" style="left:805px;top:504px;letter-spacing:1.09px;">root</div>
<svg style="left:7px;top:530.8px" width="15" height="18" viewBox="0 0 15 18"><path d="M.5 .5 H10.5 L13.5 3.5 V17 H.5Z" fill="#fafafa" stroke="#8e8e8e" stroke-width="1"/><path d="M10.5 .5 V3.5 H13.5" fill="#fff" stroke="#a6a6a6" stroke-width=".8"/></svg>
<div class="t" style="left:26px;top:528px;white-space:pre;letter-spacing:0.31px;">build.config.gki_kasan</div>
<div class="t r" style="left:318px;width:85px;top:528px;letter-spacing:-0.22px;">648 Bytes</div>
<div class="t" style="left:417px;top:528px;letter-spacing:-0.7px;">GKI_KASA...</div>
<div class="t" style="left:517px;top:528px;letter-spacing:0.14px;">2024/10/12, 0:36</div>
<div class="t" style="left:705px;top:528px;letter-spacing:0.55px;">-rw-r--r--</div>
<div class="t" style="left:805px;top:528px;letter-spacing:1.09px;">root</div>
</div>
<div class="a" style="left:1900px;top:249px;width:20px;height:568px;background:#f0f0f0"></div>
<div class="a" style="left:1900px;top:407px;width:19px;height:168px;background:#cdcdcd"></div>
<svg style="left:1904px;top:255px" width="12" height="8" viewBox="0 0 12 8"><path d="M1 6.6 L6 1.6 L11 6.6" stroke="#505050" stroke-width="1.7" fill="none"/></svg>
<svg style="left:1904px;top:801px" width="12" height="8" viewBox="0 0 12 8"><path d="M1 1.4 L6 6.4 L11 1.4" stroke="#505050" stroke-width="1.7" fill="none"/></svg>
<div class="a" style="left:0;top:822px;width:42px;height:30px;background:#90969c"></div>
<div class="t" style="left:6px;top:825px;color:#fff;font-weight:bold"><span class="c">传输</span></div>
<div class="t" style="left:50px;top:825px"><span class="c">日志</span></div>
<div class="a" style="left:0;top:853px;width:1920px;height:25px;background:#e4e8f0;border-bottom:1px solid #d3dae6"></div>
<div class="a" style="left:249px;top:853px;width:1px;height:25px;background:#d6dbe5"></div>
<div class="a" style="left:330px;top:853px;width:1px;height:25px;background:#d6dbe5"></div>
<div class="a" style="left:455px;top:853px;width:1px;height:25px;background:#d6dbe5"></div>
<div class="a" style="left:643px;top:853px;width:1px;height:25px;background:#d6dbe5"></div>
<div class="a" style="left:824px;top:853px;width:1px;height:25px;background:#d6dbe5"></div>
<div class="a" style="left:874px;top:853px;width:1px;height:25px;background:#d6dbe5"></div>
<div class="a" style="left:1080px;top:853px;width:1px;height:25px;background:#d6dbe5"></div>
<div class="a" style="left:1180px;top:853px;width:1px;height:25px;background:#d6dbe5"></div>
<div class="a" style="left:1268px;top:853px;width:1px;height:25px;background:#d6dbe5"></div>
<div class="a" style="left:1356px;top:853px;width:1px;height:25px;background:#d6dbe5"></div>
<div class="t" style="left:5px;top:854px;letter-spacing:0"><span class="c">名称</span></div>
<div class="t" style="left:255px;top:854px;letter-spacing:0"><span class="c">状态</span></div>
<div class="t" style="left:378px;top:854px;letter-spacing:0"><span class="c">进度</span></div>
<div class="t" style="left:461px;top:854px;letter-spacing:0"><span class="c">大小</span></div>
<div class="t" style="left:649px;top:854px;letter-spacing:0"><span class="c">本地路径</span></div>
<div class="t" style="left:880px;top:854px;letter-spacing:0"><span class="c">远程路径</span></div>
<div class="t" style="left:1086px;top:854px;letter-spacing:0"><span class="c">速度</span></div>
<div class="t" style="left:1186px;top:854px;letter-spacing:0"><span class="c">估计剩余</span>...</div>
<div class="t" style="left:1274px;top:854px;letter-spacing:0"><span class="c">经过时间</span></div>
<div class="t" style="left:837px;top:854px;font-size:14px;letter-spacing:1.2px">&lt;-&gt;</div>
<div class="a" style="left:0;top:879px;width:1920px;height:125px;background:#fff"></div>
<div class="t" style="left:6px;top:1005px;font-size:14px;letter-spacing:0"><span style="font-size:13px">已连接</span> 192.168.68.130:22<span style="font-size:13px">。</span></div>
<div class="t" style="left:1540px;top:1005px;font-size:13px;letter-spacing:0">二进制</div>
<div class="t" style="left:1614px;top:1005px;font-size:14px;letter-spacing:0">1<span style="font-size:13px">已选择</span></div>
<div class="t r" style="left:1784px;width:100px;top:1005px;font-size:14px;letter-spacing:0">22.93MB</div>
<svg style="left:0;top:0" width="1920" height="1030" viewBox="0 0 1920 1030"><path d="M787.3 576 L946.3 483.8 L943.4 480.8 L961.2 480 L950.2 494.6 L948.5 490.6 L788 577.3Z" fill="#f53a3a"/></svg>
<svg style="left:0;top:0" width="1920" height="1030" viewBox="0 0 1920 1030"><defs><linearGradient id="bg1" x1="0" y1="0" x2="1" y2="0"><stop offset="0" stop-color="#e9e1dc"/><stop offset=".42" stop-color="#e6ddd8"/><stop offset=".58" stop-color="#a59d9a"/><stop offset="1" stop-color="#a29a97"/></linearGradient><radialGradient id="ck"><stop offset="0" stop-color="#fdd0d0"/><stop offset=".65" stop-color="#fddcdc"/><stop offset="1" stop-color="#fff" stop-opacity="0"/></radialGradient><clipPath id="bodyclip"><path d="M1724.0 960.0 C1719.7 967.2 1716.1 977.2 1714.0 983.0 C1711.9 988.8 1711.5 990.3 1711.2 995.0 C1710.9 999.7 1711.2 1006.4 1712.3 1011.0 C1713.4 1015.6 1715.5 1019.8 1718.0 1022.5 C1720.5 1025.2 1723.2 1026.2 1727.0 1027.0 C1730.8 1027.8 1736.5 1028.5 1741.0 1027.0 C1745.5 1025.5 1748.3 1020.2 1754.0 1018.0 C1759.7 1015.8 1762.3 1015.0 1775.0 1014.0 C1787.7 1013.0 1821.3 1015.2 1830.0 1012.0 C1838.7 1008.8 1829.1 999.7 1827.0 995.0 C1824.9 990.3 1820.0 986.6 1817.5 984.0 C1815.0 981.4 1813.8 983.2 1812.0 979.5 C1810.2 975.8 1810.7 968.6 1807.0 962.0 C1803.3 955.4 1801.2 943.7 1790.0 940.0 C1778.8 936.3 1751.0 936.7 1740.0 940.0 C1729.0 943.3 1728.3 952.8 1724.0 960.0Z"/></clipPath></defs><path d="M1724.0 960.0 C1719.7 967.2 1716.1 977.2 1714.0 983.0 C1711.9 988.8 1711.5 990.3 1711.2 995.0 C1710.9 999.7 1711.2 1006.4 1712.3 1011.0 C1713.4 1015.6 1715.5 1019.8 1718.0 1022.5 C1720.5 1025.2 1723.2 1026.2 1727.0 1027.0 C1730.8 1027.8 1736.5 1028.5 1741.0 1027.0 C1745.5 1025.5 1748.3 1020.2 1754.0 1018.0 C1759.7 1015.8 1762.3 1015.0 1775.0 1014.0 C1787.7 1013.0 1821.3 1015.2 1830.0 1012.0 C1838.7 1008.8 1829.1 999.7 1827.0 995.0 C1824.9 990.3 1820.0 986.6 1817.5 984.0 C1815.0 981.4 1813.8 983.2 1812.0 979.5 C1810.2 975.8 1810.7 968.6 1807.0 962.0 C1803.3 955.4 1801.2 943.7 1790.0 940.0 C1778.8 936.3 1751.0 936.7 1740.0 940.0 C1729.0 943.3 1728.3 952.8 1724.0 960.0Z" fill="#e8e0db"/><g clip-path="url(#bodyclip)"><path d="M1700 975 C1716 990 1732 1006 1758 1016 L1770 1040 L1700 1040Z" fill="#a39b98"/><path d="M1809 1004 C1812 994 1818 988 1826 986 L1836 1010 L1809 1010Z" fill="#a39b98"/></g><path d="M1724.0 960.0 C1719.7 967.2 1716.1 977.2 1714.0 983.0 C1711.9 988.8 1711.5 990.3 1711.2 995.0 C1710.9 999.7 1711.2 1006.4 1712.3 1011.0 C1713.4 1015.6 1715.5 1019.8 1718.0 1022.5 C1720.5 1025.2 1723.2 1026.2 1727.0 1027.0 C1730.8 1027.8 1736.5 1028.5 1741.0 1027.0 C1745.5 1025.5 1748.3 1020.2 1754.0 1018.0 C1759.7 1015.8 1762.3 1015.0 1775.0 1014.0 C1787.7 1013.0 1821.3 1015.2 1830.0 1012.0 C1838.7 1008.8 1829.1 999.7 1827.0 995.0 C1824.9 990.3 1820.0 986.6 1817.5 984.0 C1815.0 981.4 1813.8 983.2 1812.0 979.5 C1810.2 975.8 1810.7 968.6 1807.0 962.0 C1803.3 955.4 1801.2 943.7 1790.0 940.0 C1778.8 936.3 1751.0 936.7 1740.0 940.0 C1729.0 943.3 1728.3 952.8 1724.0 960.0Z" fill="none" stroke="#3b2b27" stroke-width="2.5"/><path d="M1812.0 939.0 C1814.8 934.7 1825.0 935.3 1829.0 936.0 C1833.0 936.7 1834.7 940.2 1836.0 943.0 C1837.3 945.8 1837.7 950.0 1837.0 953.0 C1836.3 956.0 1836.2 959.5 1832.0 961.0 C1827.8 962.5 1815.3 965.7 1812.0 962.0 C1808.7 958.3 1809.2 943.3 1812.0 939.0Z" fill="#a8a09d" stroke="#3b2b27" stroke-width="2.3"/><path d="M1733.0 874.8 C1731.4 875.5 1730.3 873.7 1729.0 873.6 C1727.7 873.5 1726.5 873.6 1725.2 874.3 C1723.9 874.9 1722.0 876.2 1721.0 877.5 C1720.0 878.8 1719.4 880.4 1719.2 882.0 C1719.0 883.6 1719.2 885.4 1719.6 887.0 C1720.0 888.6 1721.6 889.7 1721.8 891.5 C1722.0 893.3 1721.0 895.9 1720.6 898.0 C1720.2 900.1 1720.2 901.9 1719.2 904.4 C1718.2 906.9 1715.6 909.9 1714.8 913.1 C1714.0 916.3 1713.3 920.2 1714.2 923.8 C1715.1 927.4 1717.9 931.6 1720.4 934.5 C1722.9 937.4 1725.0 939.4 1729.1 941.3 C1733.2 943.2 1738.2 944.9 1745.0 946.0 C1751.8 947.1 1761.7 948.2 1770.0 948.0 C1778.3 947.8 1788.2 946.5 1795.0 945.0 C1801.8 943.5 1806.5 940.5 1810.7 938.8 C1814.9 937.0 1817.5 936.4 1820.4 934.5 C1823.3 932.6 1826.3 930.5 1828.2 927.7 C1830.1 925.0 1831.7 921.1 1832.0 918.0 C1832.3 914.9 1831.4 912.0 1830.1 909.2 C1828.8 906.5 1825.8 903.9 1824.3 901.5 C1822.8 899.1 1821.8 897.0 1821.0 895.0 C1820.2 893.0 1819.5 891.3 1819.4 889.5 C1819.3 887.7 1820.5 885.8 1820.6 884.0 C1820.7 882.2 1820.9 880.7 1820.2 879.0 C1819.5 877.3 1818.1 875.1 1816.5 873.8 C1814.9 872.5 1812.5 871.5 1810.7 871.4 C1808.9 871.3 1807.6 873.8 1805.8 873.3 C1804.0 872.8 1802.4 869.8 1800.0 868.4 C1797.6 867.0 1794.0 865.4 1791.3 864.6 C1788.5 863.8 1785.8 864.2 1783.5 863.6 C1781.2 863.0 1779.8 861.9 1777.7 861.2 C1775.6 860.6 1773.5 859.6 1770.9 859.7 C1768.3 859.8 1765.5 861.1 1762.1 861.7 C1758.7 862.4 1753.4 862.6 1750.5 863.6 C1747.6 864.6 1746.7 867.0 1744.7 868.0 C1742.8 869.0 1740.8 868.3 1738.8 869.4 C1736.8 870.5 1734.6 874.1 1733.0 874.8Z" fill="#fff" stroke="#3b2b27" stroke-width="2.5" stroke-linejoin="round"/><path d="M1722 880 C1723 877 1727 876.5 1731 877.6 C1727 881 1724.4 885 1723.2 889 C1722 886 1721.6 883 1722 880Z" fill="#e9e1dc"/><path d="M1808 875.2 C1812 873.6 1816 875.6 1818 879.2 C1819 882 1818.6 885 1817.6 887.4 C1815 882.6 1812 878.6 1808 875.2Z" fill="#e9e1dc"/><circle cx="1752.9" cy="913.1" r="11" fill="url(#ck)"/><circle cx="1805.3" cy="907.8" r="11" fill="url(#ck)"/><path d="M1752 911 L1752.6 913.4 M1756.2 912 L1756.6 914" stroke="#f3b4b4" stroke-width="1.1" stroke-linecap="round"/><path d="M1804.4 905.2 L1805.6 907.4 M1808 904.6 L1809.4 906.4" stroke="#f3b4b4" stroke-width="1.1" stroke-linecap="round"/><ellipse cx="1759.4" cy="903.2" rx="4.5" ry="5.6" fill="#2e2320" transform="rotate(12 1759.4 903.2)"/><ellipse cx="1800.2" cy="898.5" rx="4.3" ry="5.1" fill="#2e2320" transform="rotate(-20 1800.2 898.5)"/><ellipse cx="1781.4" cy="901.9" rx="8.5" ry="7.8" fill="#2e2320"/><path d="M1782.7 899.2 L1785.3 902.2" stroke="#fff" stroke-width="1.7" stroke-linecap="round"/><path d="M1782.5 909.7 C1783.8 914 1784.2 918.4 1783 922.8 L1780.6 927.2 M1783.2 922.2 L1786.4 925.7" stroke="#4a3d3a" stroke-width="1.6" fill="none" stroke-linecap="round"/><path d="M1786.5 961.5 L1796 961.5 L1791.8 969.7Z" fill="#6da8ee" stroke="#5a5050" stroke-width="1"/><path d="M1774 945.2 L1826.2 942 Q1828.6 942 1828.9 944.2 L1830.2 955.6 Q1830.3 958 1828 958.2 L1779.5 961.6 Q1777 961.6 1776.6 959.4Z" fill="#e5928b" stroke="#3b2b27" stroke-width="2.5" stroke-linejoin="round"/><path d="M1722.0 955.0 C1722.9 952.2 1724.0 947.1 1727.0 944.5 C1730.0 941.9 1735.3 940.3 1740.0 939.4 C1744.7 938.5 1750.3 938.4 1755.0 939.0 C1759.7 939.6 1764.4 940.8 1768.0 943.0 C1771.6 945.2 1775.2 948.5 1776.5 952.0 C1777.8 955.5 1777.4 960.8 1776.0 964.0 C1774.6 967.2 1772.0 969.6 1768.0 971.5 C1764.0 973.4 1757.3 975.1 1752.0 975.6 C1746.7 976.1 1740.5 975.8 1736.0 974.5 C1731.5 973.2 1727.4 970.2 1725.0 968.0 C1722.6 965.8 1722.1 963.2 1721.6 961.0 C1721.1 958.8 1721.1 957.8 1722.0 955.0Z" fill="url(#bg1)" stroke="#3b2b27" stroke-width="2.5"/><polygon points="1763,1002.7 1829,1000.6 1868.6,1001.6 1869.6,1034 1771,1034 1762.2,1021" fill="#e5928b"/><polygon points="1763,1002.7 1868.6,1001.6 1868.8,1006.6 1770.8,1008.8" fill="#dd8780"/><polygon points="1763,1002.7 1770.8,1008.8 1770.8,1034 1762.2,1021" fill="#d2746e"/><polyline points="1770.8,1008.8 1868.8,1006.6" fill="none" stroke="#c86c66" stroke-width="1.2"/><polyline points="1770.8,1008.8 1770.8,1034" fill="none" stroke="#c86c66" stroke-width="1.2"/><polyline points="1823.6,1001.5 1824.4,1034" fill="none" stroke="#c86c66" stroke-width="1.3"/><polygon points="1763,1002.7 1829,1000.6 1868.6,1001.6 1869.6,1034 1771,1034 1762.2,1021" fill="none" stroke="#3b2b27" stroke-width="2.6" stroke-linejoin="round"/><polygon points="1829.2,985.5 1869.8,982.5 1879.4,989.4 1878.3,1002.2 1834.5,1004.4 1829.7,999" fill="#e5928b"/><polygon points="1829.2,985.5 1869.8,982.5 1879.4,989.4 1835.4,991.4" fill="#dd8780"/><polygon points="1829.2,985.5 1835.4,991.4 1834.5,1004.4 1829.7,999" fill="#d2746e"/><polyline points="1835.4,991.4 1879.4,989.4" fill="none" stroke="#c86c66" stroke-width="1.2"/><polyline points="1835.4,991.4 1834.5,1004.4" fill="none" stroke="#c86c66" stroke-width="1.2"/><polygon points="1829.2,985.5 1869.8,982.5 1879.4,989.4 1878.3,1002.2 1834.5,1004.4 1829.7,999" fill="none" stroke="#3b2b27" stroke-width="2.6" stroke-linejoin="round"/><polygon points="1817.5,965.9 1863.4,965.4 1869.2,972.3 1867.6,987.3 1822.8,988.3 1819,983" fill="#e5928b"/><polygon points="1817.5,965.9 1863.4,965.4 1869.2,972.3 1823.6,973.2" fill="#dd8780"/><polygon points="1817.5,965.9 1823.6,973.2 1822.8,988.3 1819,983" fill="#d2746e"/><polyline points="1823.6,973.2 1869.2,972.3" fill="none" stroke="#c86c66" stroke-width="1.2"/><polyline points="1823.6,973.2 1822.8,988.3" fill="none" stroke="#c86c66" stroke-width="1.2"/><polygon points="1817.5,965.9 1863.4,965.4 1869.2,972.3 1867.6,987.3 1822.8,988.3 1819,983" fill="none" stroke="#3b2b27" stroke-width="2.6" stroke-linejoin="round"/></svg>
<div class="a" style="left:1887px;top:827px;width:28px;height:97px;border:2px solid #4a3f3d;border-radius:16px;background:#fff"></div>
<div class="a" style="left:1892px;top:857px;width:22px;height:11px;background:#8fb8f7;border-radius:2px"></div>
<div class="t" style="left:1891px;top:832px;width:24px;height:13px;line-height:13px;font-size:11px;font-weight:bold;color:#3d3433;letter-spacing:0;text-align:center">打字</div>
<div class="t" style="left:1891px;top:842px;width:24px;height:13px;line-height:13px;font-size:11px;font-weight:bold;color:#3d3433;letter-spacing:0;text-align:center">跟酷</div>
<div class="t" style="left:1891px;top:856px;width:24px;height:13px;line-height:13px;font-size:11px;font-weight:bold;color:#3d3433;letter-spacing:0;text-align:center">搬砖</div>
<div class="t" style="left:1891px;top:867.5px;width:24px;height:13px;line-height:13px;font-size:11px;font-weight:bold;color:#3d3433;letter-spacing:0;text-align:center">打工</div>
<div class="t" style="left:1891px;top:880.5px;width:24px;height:13px;line-height:13px;font-size:11px;font-weight:bold;color:#3d3433;letter-spacing:0;text-align:center">摸鱼</div>
<div class="t" style="left:1891px;top:894px;width:24px;height:13px;line-height:13px;font-size:11px;font-weight:bold;color:#3d3433;letter-spacing:0;text-align:center">吃饭</div>
<div class="t" style="left:1893px;top:905px;width:20px;height:20px;line-height:20px;font-size:16.5px;font-weight:bold;color:#e9b5b0;letter-spacing:0;text-align:center;-webkit-text-stroke:1.3px #4a3f3d">S</div>
<div class="t" style="left:1892px;top:931px;width:24px;height:26px;line-height:26px;font-size:20px;font-weight:bold;color:#3d3433;letter-spacing:0;text-align:center">中</div>
<svg style="left:1894px;top:958px" width="20" height="20" viewBox="0 0 20 20"><path d="M6.4 1.6 L1.2 5.6 L4 9.4 L5.4 8.6 V17.6 H14.6 V8.6 L16 9.4 L18.8 5.6 L13.6 1.6 C12.4 3.6 7.6 3.6 6.4 1.6Z" fill="#8fbcf6" stroke="#3d3433" stroke-width="1.8" stroke-linejoin="round"/></svg>
</body></html>
